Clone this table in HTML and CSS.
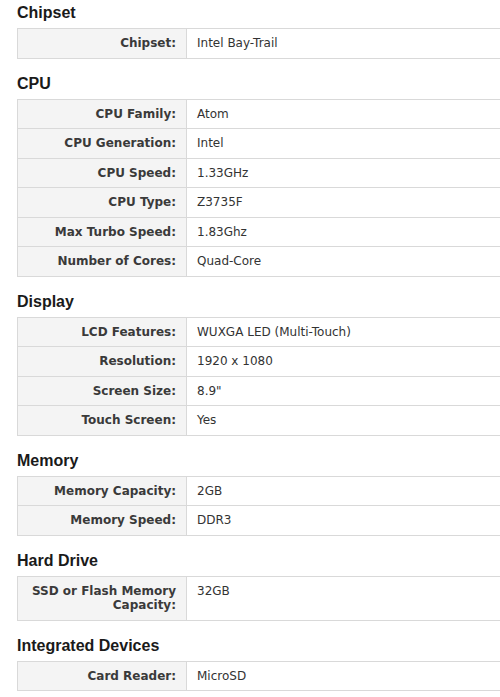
FILE: index.html
```html
<!DOCTYPE html>
<html>
<head>
<meta charset="utf-8">
<link rel="stylesheet" href="styles.css">
</head>
<body>
<div class="specs">
  <h2 class="sec-title">Chipset</h2>
  <table class="spec-table">
    <tr><th>Chipset:</th><td>Intel Bay-Trail</td></tr>
  </table>

  <h2 class="sec-title">CPU</h2>
  <table class="spec-table">
    <tr><th>CPU Family:</th><td>Atom</td></tr>
    <tr><th>CPU Generation:</th><td>Intel</td></tr>
    <tr><th>CPU Speed:</th><td>1.33GHz</td></tr>
    <tr><th>CPU Type:</th><td>Z3735F</td></tr>
    <tr><th>Max Turbo Speed:</th><td>1.83Ghz</td></tr>
    <tr><th>Number of Cores:</th><td>Quad-Core</td></tr>
  </table>

  <h2 class="sec-title">Display</h2>
  <table class="spec-table">
    <tr><th>LCD Features:</th><td>WUXGA LED (Multi-Touch)</td></tr>
    <tr><th>Resolution:</th><td>1920 x 1080</td></tr>
    <tr><th>Screen Size:</th><td>8.9"</td></tr>
    <tr><th>Touch Screen:</th><td>Yes</td></tr>
  </table>

  <h2 class="sec-title">Memory</h2>
  <table class="spec-table">
    <tr><th>Memory Capacity:</th><td>2GB</td></tr>
    <tr><th>Memory Speed:</th><td>DDR3</td></tr>
  </table>

  <h2 class="sec-title">Hard Drive</h2>
  <table class="spec-table">
    <tr><th>SSD or Flash Memory Capacity:</th><td>32GB</td></tr>
  </table>

  <h2 class="sec-title">Integrated Devices</h2>
  <table class="spec-table">
    <tr><th>Card Reader:</th><td>MicroSD</td></tr>
  </table>
</div>
</body>
</html>
```
FILE: styles.css
```css
html, body {
  margin: 0;
  padding: 0;
  background: #fff;
}
body {
  overflow: hidden;
  width: 500px;
}
.specs {
  padding: 4px 0 0 17px;
  width: 483px;
  overflow: hidden;
}
.sec-title {
  font-family: "Liberation Sans", Arial, sans-serif;
  font-weight: bold;
  font-size: 16px;
  line-height: 18px;
  color: #1a1a1a;
  margin: 16px 0 6px 0;
}
.sec-title:first-child {
  margin-top: 0;
}
.spec-table {
  border-collapse: collapse;
  width: 500px;
  font-family: "DejaVu Sans", Verdana, sans-serif;
  font-size: 12px;
  line-height: 14.5px;
  color: #333;
}
.spec-table th,
.spec-table td {
  border: 1px solid #d9d9d9;
  padding: 7px 10px;
  vertical-align: top;
}
.spec-table th {
  width: 148px;
  text-align: right;
  font-weight: bold;
  background: #f4f4f4;
  color: #3a3a3a;
}
.spec-table td {
  text-align: left;
  font-weight: normal;
  background: #fff;
}
```
